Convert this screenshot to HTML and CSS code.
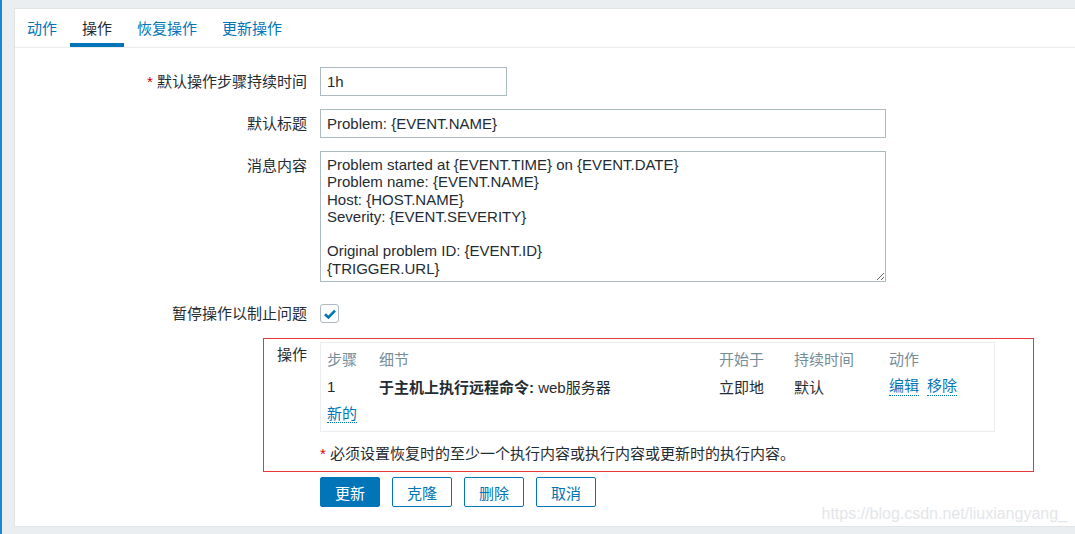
FILE: index.html
```html
<!DOCTYPE html>
<html lang="zh">
<head>
<meta charset="utf-8">
<title>操作</title>
<link rel="stylesheet" href="styles.css">
</head>
<body>
<div class="panel">
  <ul class="tabs">
    <li class="tab"><a href="#">动作</a></li>
    <li class="tab active"><a href="#">操作</a></li>
    <li class="tab"><a href="#">恢复操作</a></li>
    <li class="tab"><a href="#">更新操作</a></li>
  </ul>
  <div class="form">
    <div class="row">
      <label class="lbl"><span class="req">*</span> 默认操作步骤持续时间</label>
      <div class="field"><input class="input short" type="text" value="1h"></div>
    </div>
    <div class="row">
      <label class="lbl">默认标题</label>
      <div class="field"><input class="input wide" type="text" value="Problem: {EVENT.NAME}"></div>
    </div>
    <div class="row">
      <label class="lbl">消息内容</label>
      <div class="field"><textarea class="textarea">Problem started at {EVENT.TIME} on {EVENT.DATE}
Problem name: {EVENT.NAME}
Host: {HOST.NAME}
Severity: {EVENT.SEVERITY}

Original problem ID: {EVENT.ID}
{TRIGGER.URL}</textarea></div>
    </div>
    <div class="row row-check">
      <label class="lbl lbl-check">暂停操作以制止问题</label>
      <div class="field">
        <span class="checkbox"><svg width="14" height="14" viewBox="0 0 14 14"><path d="M2 7.2 L5.4 10.4 L12 3.6" fill="none" stroke="#0275b8" stroke-width="2.6" stroke-linejoin="miter"/></svg></span>
      </div>
    </div>
    <div class="ops">
      <label class="lbl lbl-ops">操作</label>
      <div class="ops-field">
        <div class="ops-table">
          <div class="tr th">
            <span class="c1">步骤</span><span class="c2">细节</span><span class="c3">开始于</span><span class="c4">持续时间</span><span class="c5">动作</span>
          </div>
          <div class="tr">
            <span class="c1">1</span><span class="c2"><b>于主机上执行远程命令:</b> web服务器</span><span class="c3">立即地</span><span class="c4">默认</span><span class="c5"><a class="link" href="#">编辑</a><a class="link" href="#">移除</a></span>
          </div>
          <div class="tr">
            <span class="c1"><a class="link" href="#">新的</a></span>
          </div>
        </div>
        <div class="note"><span class="req">*</span> 必须设置恢复时的至少一个执行内容或执行内容或更新时的执行内容。</div>
      </div>
    </div>
    <div class="buttons">
      <button class="btn primary">更新</button>
      <button class="btn">克隆</button>
      <button class="btn">删除</button>
      <button class="btn">取消</button>
    </div>
  </div>
  <div class="watermark">https://blog.csdn.net/liuxiangyang_</div>
</div>
</body>
</html>
```
FILE: styles.css
```css
html, body {
  margin: 0;
  padding: 0;
}
body {
  background: #ebeef0;
  border-left: 2px solid #1a86d8;
  height: 534px;
  box-sizing: border-box;
  padding-top: 8px;
  font-family: "Liberation Sans", "Noto Sans CJK SC", sans-serif;
  font-size: 15px;
  color: #1f2c33;
  overflow: hidden;
}
.panel {
  position: relative;
  margin-left: 12px;
  background: #fff;
  border: 1px solid #dfe4e7;
  border-right: none;
  height: 519px;
  box-sizing: border-box;
}
.tabs {
  list-style: none;
  margin: 0;
  padding: 0;
  display: flex;
  gap: 1px;
  height: 39px;
  box-sizing: border-box;
  border-bottom: 1px solid #ebeef0;
}
.tab a {
  display: block;
  height: 38px;
  box-sizing: border-box;
  padding: 10px 12px 0;
  line-height: 20px;
  color: #0275b8;
  text-decoration: none;
  border-bottom: 4px solid transparent;
}
.tab.active a {
  color: #1f2c33;
  border-bottom-color: #0275b8;
}
.form {
  padding-top: 19px;
}
.row {
  display: flex;
  margin-bottom: 13px;
}
.lbl {
  width: 292px;
  flex: none;
  text-align: right;
  line-height: 29px;
  margin-right: 13px;
  white-space: nowrap;
}
.req {
  color: #d40000;
}
.input {
  display: block;
  box-sizing: border-box;
  height: 29px;
  border: 1px solid #acbbc2;
  padding: 0 6px;
  font: inherit;
  color: #1f2c33;
  outline: none;
}
.input.short { width: 187px; }
.input.wide { width: 566px; }
.textarea {
  display: block;
  box-sizing: border-box;
  width: 566px;
  height: 131px;
  border: 1px solid #acbbc2;
  padding: 4px 6px;
  font: inherit;
  line-height: 17.3px;
  color: #1f2c33;
  outline: none;
  resize: both;
}
.row-check {
  margin-top: 22px;
  align-items: center;
  margin-bottom: 15px;
}
.lbl-check {
  line-height: 19px;
}
.checkbox {
  display: flex;
  align-items: center;
  justify-content: center;
  width: 19px;
  height: 19px;
  box-sizing: border-box;
  border: 1px solid #acbbc2;
  border-radius: 3px;
}
.ops {
  display: flex;
  margin-left: 248px;
  width: 771px;
  box-sizing: border-box;
  border: 1px solid #e8383d;
  padding: 3px 0 7px;
}
.lbl-ops {
  width: 43px;
  line-height: 26px;
}
.ops-field {
  width: 675px;
}
.ops-table {
  border: 1px solid #ebeef0;
  padding: 1px 0 3px 6px;
}
.tr {
  display: flex;
  height: 28px;
  align-items: center;
  white-space: nowrap;
}
.th {
  color: #768d99;
}
.c1 { width: 52px; }
.c2 { width: 340px; }
.c3 { width: 75px; }
.c4 { width: 95px; }
.c5 { display: flex; gap: 8px; }
.c2 b { font-weight: bold; }
.link {
  color: #0275b8;
  text-decoration: none;
  border-bottom: 1px dotted #0275b8;
  line-height: 18px;
}
.note {
  margin-top: 12px;
  line-height: 20px;
}
.buttons {
  display: flex;
  gap: 12px;
  margin: 5px 0 0 305px;
}
.btn {
  width: 60px;
  height: 30px;
  box-sizing: border-box;
  border: 1px solid #0275b8;
  border-radius: 2px;
  background: #fff;
  color: #0275b8;
  font: inherit;
  padding: 0;
}
.btn.primary {
  background: #0275b8;
  color: #fff;
}
.watermark {
  position: absolute;
  right: 8px;
  top: 496px;
  font-size: 16px;
  color: #e3e6e9;
  letter-spacing: 0;
}
```
